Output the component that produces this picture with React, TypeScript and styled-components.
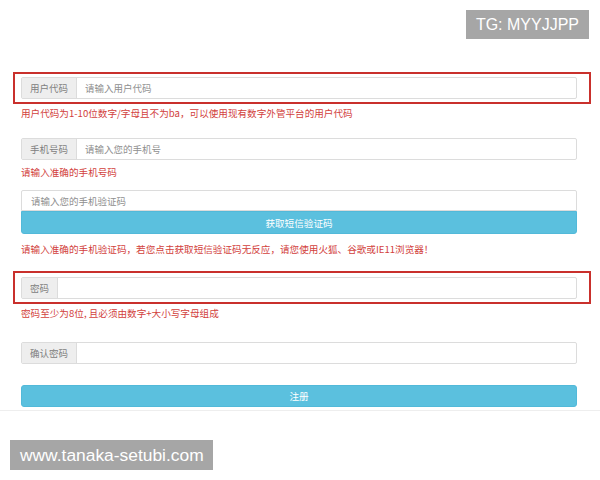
import React from "react";
import styled, { createGlobalStyle } from "styled-components";

const Global = createGlobalStyle`
  html, body { margin: 0; padding: 0; background: #fff; }
  body { font-family: "Noto Sans CJK SC", "Noto Sans", sans-serif; }
  * { box-sizing: border-box; }
`;

const Page = styled.div`
  position: relative;
  width: 600px;
  height: 480px;
  overflow: hidden;
  background: #fff;
`;

const Form = styled.div`
  display: flex;
  flex-direction: column;
  padding: 72px 23px 0 21px;
`;

const Highlight = styled.div<{ $mt?: number }>`
  margin: ${(p) => p.$mt ?? 0}px -14px 0 -8px;
  padding: 3px 12px 3px 6px;
  border: 2px solid #c9302c;
`;

const Group = styled.div<{ $mt?: number; $h?: number; $flat?: boolean }>`
  display: flex;
  height: ${(p) => p.$h ?? 22}px;
  margin-top: ${(p) => p.$mt ?? 0}px;
  border: 1px solid #dcdcdc;
  border-radius: ${(p) => (p.$flat ? "2px 2px 0 0" : "2px")};
  background: #fff;
`;

const Addon = styled.div`
  display: flex;
  align-items: center;
  padding: 0 8px;
  background: #eeeeee;
  border-right: 1px solid #dcdcdc;
  color: #808080;
  font-size: 9.5px;
  white-space: nowrap;
`;

const Field = styled.input<{ $pl?: number }>`
  flex: 1;
  min-width: 0;
  border: none;
  outline: none;
  background: transparent;
  padding: 0 0 0 ${(p) => p.$pl ?? 8}px;
  font-family: "Noto Sans CJK SC", "Noto Sans", sans-serif;
  font-size: 9.5px;
  color: #555;
  &::placeholder { color: #8f8f8f; }
`;

const Hint = styled.div<{ $mt: number }>`
  margin-top: ${(p) => p.$mt}px;
  height: 14px;
  line-height: 14px;
  color: #d2413c;
  font-size: 9.6px;
  white-space: nowrap;
`;

const Button = styled.div<{ $mt?: number; $h: number; $top?: boolean }>`
  display: flex;
  align-items: center;
  justify-content: center;
  height: ${(p) => p.$h}px;
  margin-top: ${(p) => p.$mt ?? 0}px;
  background: #5bc0de;
  border: 1px solid #52b9d9;
  border-radius: ${(p) => (p.$top ? "0 0 3px 3px" : "3px")};
  color: #fff;
  font-size: 9.6px;
`;

const Divider = styled.div`
  margin-top: 3px;
  height: 1px;
  background: #eeeeee;
`;

const Badge = styled.div`
  position: absolute;
  background: #a6a6a6;
  color: #fff;
  font-family: "Liberation Sans", Arial, sans-serif;
  white-space: nowrap;
  display: flex;
  align-items: center;
`;

const TgBadge = styled(Badge)`
  top: 10px;
  right: 11px;
  height: 29px;
  padding: 0 10px;
  font-size: 16px;
`;

const SiteBadge = styled(Badge)`
  top: 440px;
  left: 10px;
  height: 30px;
  padding: 0 9px 0 10px;
  font-size: 17.4px;
`;

export default function App() {
  return (
    <Page>
      <Global />
      <Form>
        <Highlight>
          <Group>
            <Addon>用户代码</Addon>
            <Field placeholder="请输入用户代码" />
          </Group>
        </Highlight>
        <Hint $mt={2}>用户代码为1-10位数字/字母且不为ba，可以使用现有数字外管平台的用户代码</Hint>

        <Group $mt={18}>
          <Addon>手机号码</Addon>
          <Field placeholder="请输入您的手机号" />
        </Group>
        <Hint $mt={5}>请输入准确的手机号码</Hint>

        <Group $mt={11} $h={21} $flat>
          <Field $pl={9} placeholder="请输入您的手机验证码" />
        </Group>
        <Button $h={23} $top>获取短信验证码</Button>
        <Hint $mt={8}>请输入准确的手机验证码，若您点击获取短信验证码无反应，请您使用火狐、谷歌或IE11浏览器！</Hint>

        <Highlight $mt={15}>
          <Group $mt={1}>
            <Addon>密码</Addon>
            <Field type="password" />
          </Group>
        </Highlight>
        <Hint $mt={2}>密码至少为8位, 且必须由数字+大小写字母组成</Hint>

        <Group $mt={22}>
          <Addon>确认密码</Addon>
          <Field type="password" />
        </Group>

        <Button $mt={21} $h={22}>注册</Button>
      </Form>
      <Divider />
      <TgBadge>TG: MYYJJPP</TgBadge>
      <SiteBadge>www.tanaka-setubi.com</SiteBadge>
    </Page>
  );
}
